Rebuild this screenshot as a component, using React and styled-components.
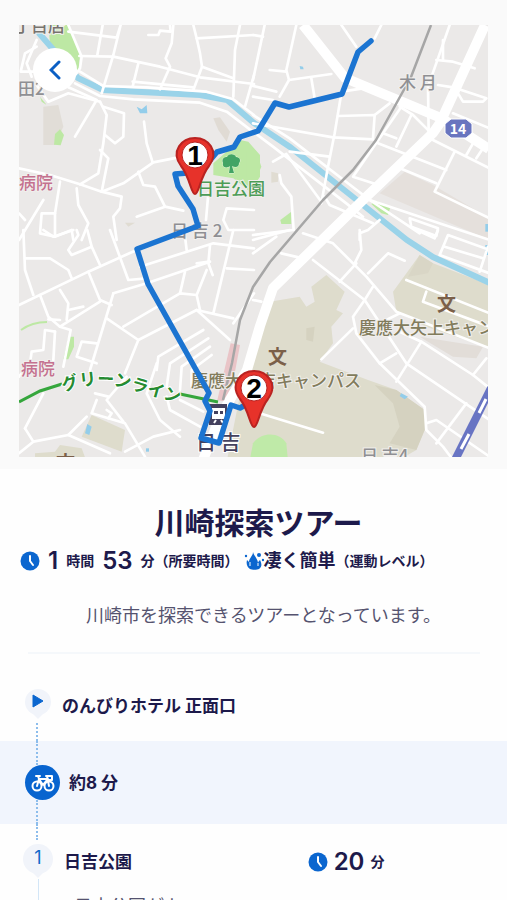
import React from 'react';
import styled, { createGlobalStyle } from 'styled-components';

const GlobalStyle = createGlobalStyle`
  * {
    box-sizing: border-box;
  }

  body {
    margin: 0;
    background-color: #fefefe;
    color: #1d1a4b;
    font-family: Inter, 'Noto Sans CJK JP', sans-serif;
  }
`;

const MapSection = styled.section`
  position: relative;
  padding: 25px 19px 12px;
  background-color: #fafafa;
`;

const MapCanvas = styled.svg`
  display: block;
  width: 100%;
  height: auto;
  font-family: 'Noto Sans CJK JP', sans-serif;
`;

const BackButton = styled.button`
  position: absolute; /* 지도 위에 표시 */
  top: 48px;
  left: 33px;
  display: flex;
  align-items: center;
  justify-content: center;
  width: 44px;
  height: 44px;
  padding: 0;
  border: none;
  border-radius: 50%;
  background-color: #fff;
  cursor: pointer;
`;

const Summary = styled.section`
  padding: 36px 0 0;
`;

const Title = styled.h1`
  margin: 0;
  padding-left: 10px;
  font-size: 30px;
  font-weight: 700;
  line-height: 36px;
  text-align: center;
`;

const StatList = styled.div`
  display: flex;
  align-items: center;
  gap: 5px;
  height: 28px;
  margin-top: 6px;
  padding-left: 20px;
  white-space: nowrap;
`;

const Stat = styled.div`
  display: flex;
  align-items: center;
  gap: ${(props) => props.$gap || 0}px;
`;

const Amount = styled.span`
  font-size: 24px;
  font-weight: 600;
  line-height: 28px;
`;

const Unit = styled.span`
  font-size: 14px;
  font-weight: 700;
  line-height: 28px;
`;

const Level = styled.span`
  font-size: 18px;
  font-weight: 700;
  line-height: 28px;
`;

const Description = styled.p`
  margin: 27px 0 0;
  padding-left: 20px;
  color: #55536f;
  font-size: 18px;
  font-weight: 400;
  line-height: 28px;
  text-align: center;
`;

const Divider = styled.hr`
  height: 2px;
  margin: 22px 27px 0 28px;
  border: none;
  background-color: #f5f8fb;
`;

const Timeline = styled.ol`
  margin: 0;
  padding: 17px 0 0;
  list-style: none;
`;

const Stop = styled.li`
  display: flex;
  min-height: ${(props) => props.$height}px;
  background-color: ${(props) => (props.$moving ? '#f1f5fd' : 'transparent')};
`;

const Rail = styled.div`
  display: flex;
  flex-direction: column;
  flex: none;
  width: ${(props) => props.$width}px;
  padding-top: ${(props) => props.$top || 0}px;
`;

const Dots = styled.span`
  flex: ${(props) => (props.$length ? 'none' : 1)};
  height: ${(props) => props.$length || 0}px;
  margin: ${(props) => props.$gap || 0}px 0 ${(props) => props.$after || 0}px 36px;
  border-left: 2px dotted #8dbdec;
`;

const Line = styled.span`
  flex: 1;
  margin-left: 38px;
  border-left: 1px solid #d3e6f7;
`;

const Pin = styled.span`
  position: relative;
  display: flex;
  align-items: center;
  justify-content: center;
  width: ${(props) => props.$size}px;
  height: ${(props) => props.$size}px;
  margin: 0 0 5px ${(props) => 38 - Math.floor(props.$size / 2)}px;
  padding-bottom: 3px;
  border-radius: 50%;
  background-color: #f1f4fa;
  color: #1069c9;
  font-size: 18px;
  line-height: 26px;

  &::after {
    content: '';
    position: absolute;
    bottom: -4px;
    left: calc(50% - 6px);
    border: 6px solid transparent;
    border-top-color: #f1f4fa;
    border-bottom: none;
  }
`;

const BikeBadge = styled.span`
  display: flex;
  align-items: center;
  justify-content: center;
  width: 35px;
  height: 35px;
  margin-left: 25px;
  border-radius: 50%;
  background-color: #0864cf;
`;

const StopBody = styled.div`
  flex: 1;
  align-self: ${(props) => (props.$top ? 'flex-start' : 'center')};
  padding-top: ${(props) => props.$top || 0}px;
`;

const StopHead = styled.div`
  display: grid;
  grid-template-columns: 55fr 45fr;
  align-items: center;
`;

const StopName = styled.h2`
  margin: 0;
  font-size: 17px;
  font-weight: 700;
  line-height: 34px;
`;

const StopText = styled.p`
  margin: 14px 0 0;
  padding: 0 20px 0 10px;
  color: #55536f;
  font-size: 18px;
  font-weight: 400;
  line-height: 28px;
`;

// 타일 하나는 3배 좌표로 되어 있음
const tiles = [
  {
    x: 0,
    y: 0,
    areas: [
      ['#bde8a4', 'M145 75H205L240 165 235 215 150 130z'],
      ['#e1ddd7', 'M130 320L175 315 190 380 165 435 130 435z'],
      ['#bde8a4', 'M165 402L180 388 192 405 182 436 162 434z'],
      ['#bde8a4', 'M120 290L140 315 125 305z'],
      ['#e0dbd4', 'M640 355L660 352 690 395 680 425 655 390z'],
      ['#bde8a4', 'M640 490L720 420 745 425 780 465 780 530 750 575 700 535 640 525z'],
      ['#93cdea', 'M410 320L425 328 440 315 442 340 420 340z'],
      ['#e0dcd2', 'M375 668L405 668 385 680z'],
    ],
    roads: [
      'M205 75L245 170 240 205 228 222', 'M57 505L150 525 240 553 305 575 370 550 460 487 535 472',
      'M205 95L350 113 362 75 340 165 305 280', 'M308 75L292 165', 'M238 168L340 170 480 200 600 232 762 252',
      'M445 105L475 105 480 92 512 95 510 75', 'M520 75L515 130 497 175 510 200 480 268',
      'M580 75L590 115 600 160 606 200 580 270', 'M590 115L762 105', 'M720 75L705 150 700 290', 'M762 225L735 320',
      'M415 190L398 260', 'M398 245L580 262', 'M606 200L700 235', 'M225 250L300 288 400 298 600 308 680 335 762 398',
      'M240 215L310 258 440 262 620 275 700 298 762 345', 'M110 140L75 160 62 215 100 215', 'M110 120L80 190 95 230',
      'M110 255L145 305 205 280 300 305', 'M205 262L290 300 225 410', 'M300 305L320 345 310 430 295 520 240 553',
      'M310 320L372 340 370 410 345 430 315 405', 'M300 450L325 475 305 575', 'M432 365L440 430 458 487',
      'M415 515L430 555 465 560 495 620 550 632', 'M410 650L495 620', 'M230 565L235 615 265 670 245 720',
      'M305 575L365 590 360 625 340 650 350 720', 'M180 545L165 640 125 640 120 700 165 710 215 690 220 720',
      'M165 640V710', 'M130 600L57 720', 'M57 640L75 660', 'M625 580L618 660', 'M762 630L680 625 670 660 685 690 762 690',
    ],
  },
  {
    x: 253,
    y: 0,
    areas: [
      ['#e5e0dc', 'M455 515L540 555 710 655V720L380 580z'],
      ['#bde8a4', 'M355 612L370 603 412 622 405 645 385 640z'],
      ['#bde8a4', 'M-20 425L10 455 25 500 10 535-20 560z'],
      ['#bde8a4', 'M82 660L115 635V672H85z'],
      ['#93cdea', 'M140 198L150 200 152 208 142 208z'],
      ['#93cdea', 'M697 672H710V695H697z'],
      ['#e0dcd2', 'M55 515L75 520V545L55 548z'],
    ],
    roads: [
      'M35 75L0 240', 'M130 75L100 210 108 240 80 290', 'M50 210L100 215', 'M108 240L235 222', 'M0 105L30 110',
      'M175 235L185 295', 'M265 75L310 140', 'M385 75L365 115', 'M0 258L70 275', 'M0 290L60 300',
      'M265 280L245 400 225 500 205 610', 'M255 348L365 345 360 415', 'M0 370L240 412 360 418', 'M365 345L410 310',
      'M265 275L330 265', 'M0 395L60 440 280 610 330 650', 'M0 345L110 415 350 600 500 700', 'M60 485L100 462 205 605',
      'M110 455L230 470', 'M440 320L480 345 530 395', 'M475 345L430 440', 'M390 400L430 415', 'M375 430L580 510',
      'M445 320L300 530 370 553', 'M525 260L527 395', 'M590 75L555 175 525 260', 'M550 180L600 185 665 205',
      'M570 120V180', 'M555 255L600 262 700 295 690 305 630 305 615 280', 'M600 340L710 385', 'M540 420L710 505',
      'M605 455L545 575 710 655', 'M430 500L550 550', 'M640 465L660 430', 'M670 475L690 445', 'M80 525L85 550 115 590 122 690',
      'M0 705L120 690', 'M215 590L230 615 360 670', 'M350 600L500 650 710 720', 'M380 660L345 690 320 700V720',
      'M470 655L555 685 550 708 475 680z',
    ],
  },
  {
    x: 0,
    y: 230,
    areas: [
      ['#e9c4c7', 'M692 340L720 345 688 517 652 510z'],
      ['#bde8a4', 'M205 320H222V350L205 388H190L200 345z'],
      ['#dedccc', 'M275 555L375 600 365 665 245 620z'],
      ['#dedccc', 'M105 670L165 665 180 645 245 655 255 682H105z'],
      ['#93cdea', 'M262 582L275 590 268 615 255 610z'],
      ['#93cdea', 'M438 655H447V665H438z'],
    ],
    roads: [
      'M57 225L265 125 410 60', 'M70 0L75 120 100 195', 'M130 0L160 20 220 0', 'M75 85L150 85 205 120 215 145',
      'M262 0L275 50 300 105', 'M275 50L215 75 205 60 235 15 230 0', 'M265 125L300 210 335 225', 'M300 215L180 290',
      'M120 195L145 260 180 290', 'M180 180L205 220 200 270', 'M205 240L250 230', 'M330 0L385 150 440 145',
      'M340 190L440 160 630 95', 'M340 190L325 240 270 420', 'M320 265L415 330 590 240 700 265', 'M415 330L375 430',
      'M370 290L540 190 590 195 600 240', 'M540 190L555 125', 'M590 195L620 120', 'M420 110L640 40 762 55',
      'M700 0L640 250', 'M762 120L680 115', 'M555 20L560 60', 'M630 45L625 100 638 135', 'M590 100L628 95',
      'M610 300L475 380 470 420', 'M625 325L510 400 500 470', 'M630 350L545 410 540 480', 'M635 375L575 420 575 470',
      'M590 240L690 330', 'M470 400L440 490 480 570 540 620', 'M500 500L510 540 600 590', 'M540 510L610 545',
      'M762 190L700 280', 'M180 290L212 300 190 410', 'M180 270L145 268', 'M165 305L135 300 130 360 95 365 90 400 57 440',
      'M165 305L160 390', 'M290 340L245 335 230 380 290 400', 'M57 670L100 635 205 615 260 560', 'M75 595L100 635',
      'M75 595L130 490', 'M290 510L275 550 375 580 435 680', 'M380 440L320 510 370 575', 'M285 490L325 500',
      'M205 615L330 670', 'M375 665L460 620 540 600', 'M320 540L335 550 325 565',
    ],
  },
  {
    x: 253,
    y: 230,
    areas: [
      ['#dedccc', 'M50 215L140 200 160 230 185 215 175 170 220 135 275 185 250 240 270 250 235 290 240 340 200 395 345 450 430 480 515 540 515 600 490 660 420 700H-80L-40 500 0 320z'],
      ['#d5d2c0', 'M160 295L185 290 180 335 160 330z'],
      ['#d5d2c0', 'M365 465L430 480 515 540 515 600 490 660 410 640 440 590 420 520z'],
      ['#dedccc', 'M500 75L540 100 710 165V355L520 290 430 245 420 185z'],
      ['#d9d6c6', 'M500 75L540 100 525 130 465 140z'],
      ['#e2ddd8', 'M500 320L690 350 670 385 600 380z'],
      ['#bfeaa8', 'M0 640C25 605 80 605 100 640L104 682H-8z'],
      ['#93cdea', 'M445 490L465 500 455 508 440 498z'],
      ['#93cdea', 'M697 45H707V75H697z'],
    ],
    roads: [
      'M150 10L240 40 340 140 430 245 710 355', 'M180 90L335 210 460 400 710 570', 'M310 100L260 155',
      'M360 170L335 210 300 260 310 310 380 400 515 530 520 600 570 650 600 690', 'M345 130L405 70 455 92',
      'M320 0L325 60 305 100', 'M300 295L205 388', 'M380 400L430 370', 'M505 335L430 455', 'M440 305L505 335 660 435 710 475',
      'M400 270L440 250', 'M660 435L700 385', 'M640 520L550 640', 'M520 580L550 570 710 680', 'M460 150L710 250',
      'M520 185L510 215 710 290', 'M710 130L560 75 585 15 710 60', 'M575 50L690 85', 'M705 50L680 125',
      'M480 -5L545 25 555 0', 'M20 550L210 608', 'M0 210L25 215', 'M85 70L150 85', 'M0 30L110 0', 'M0 70L70 20',
    ],
  },
];

const highways = [
  'M303 25L345 78 441 118 489 149',
  'M485 25L440 123 433 133 363 200 273 288 260 326 247 370 220 417 203 460',
];

const waters = ['M38 32L78 78 103 90 200 95 227 100 254 123 290 147 353 197 407 240 433 257 490 283'];

const railway = 'M431 25L411 77 376 140 353 170 323 200 270 262 253 287 240 320 232 363 223 400';

const route =
  'M371 41L358 52 342 94 289 107 275 103 258 131 240 137 234 147 217 152 200 172 175 174 178 186 193 209 198 226 137 249 148 284 209 393 205 401 210 411 201 438 219 443 231 405 240 408 254 400';

const labels = [
  { x: 14, y: 32, text: '丁目店', color: '#77736e' },
  { x: 18, y: 95, text: '田2', color: '#8f8f93' },
  { x: 19, y: 189, text: '病院', color: '#c4718f' },
  { x: 21, y: 375, text: '病院', color: '#c4718f' },
  { x: 197, y: 195, text: '日吉公園', color: '#4c9c56' },
  { x: 171, y: 237, text: '日 吉 2', color: '#8f8f93' },
  { x: 399, y: 89, text: '木 月', color: '#8f8f93' },
  { x: 191, y: 387, text: '慶應大日吉キャンパス', color: '#827c5c' },
  { x: 359, y: 334, text: '慶應大矢上キャンパス', color: '#827c5c' },
  { x: 361, y: 462, text: '日 吉4', color: '#8f8f93' },
];

const schools = [
  { x: 268, y: 364 },
  { x: 437, y: 311 },
  { x: 56, y: 470 },
];

const spots = [
  { x: 195, y: 155, number: 1 },
  { x: 254, y: 388, number: 2 },
];

const TourMap = () => (
  <MapCanvas viewBox="19 25 469 432">
    <rect x="19" y="25" width="469" height="432" fill="#ebe9e8" />
    {tiles.map((tile) => (
      <g key={`area-${tile.x}-${tile.y}`} transform={`translate(${tile.x} ${tile.y}) scale(${1 / 3})`}>
        {tile.areas.map(([color, d]) => (
          <path key={d} d={d} fill={color} />
        ))}
      </g>
    ))}
    {waters.map((d) => (
      <path key={d} d={d} fill="none" stroke="#9ad3e9" strokeWidth="6" />
    ))}
    {tiles.map((tile) => (
      <g
        key={`road-${tile.x}-${tile.y}`}
        transform={`translate(${tile.x} ${tile.y}) scale(${1 / 3})`}
        fill="none"
        stroke="#fff"
        strokeWidth="8"
        strokeLinejoin="round"
        strokeLinecap="round"
      >
        {tile.roads.map((d) => (
          <path key={d} d={d} />
        ))}
      </g>
    ))}
    {highways.map((d) => (
      <path key={d} d={d} fill="none" stroke="#fff" strokeWidth="10" strokeLinejoin="round" />
    ))}
    <path d={railway} fill="none" stroke="#a6a6a6" strokeWidth="2.5" strokeLinejoin="round" />

    {/* 고속도로 */}
    <path d="M491 388L455 460" stroke="#6874c3" strokeWidth="8" />
    <path d="M486 399L479 413M469 434L461 449" stroke="#fff" strokeWidth="3" />

    {/* 그린라인 */}
    <path d="M19 402L40 391 62 384M180 394L218 402" fill="none" stroke="#35a63c" strokeWidth="3" />
    <path d="M21 330Q32 322 47 322" fill="none" stroke="#bde8a4" strokeWidth="2" />
    <path id="greenLine" d="M64 392C87 382 112 383 137 391S167 399 195 408" fill="none" />
    <text fill="#258b31" stroke="#fff" strokeWidth="2" paintOrder="stroke" fontSize="17" fontWeight="700">
      <textPath href="#greenLine">グリーンライン</textPath>
    </text>

    {labels.map((label) => (
      <text
        key={`${label.text}${label.y}`}
        x={label.x}
        y={label.y}
        fill={label.color}
        stroke="#f1efed"
        strokeWidth="2"
        paintOrder="stroke"
        fontSize="17"
        fontWeight="500"
      >
        {label.text}
      </text>
    ))}
    {schools.map((school) => (
      <text key={school.x} x={school.x} y={school.y} fill="#7b6049" fontSize="19" fontWeight="700">
        文
      </text>
    ))}

    {/* 공원 나무 */}
    <path
      d="M229 173L230 166C226 169 222 167 223 163C221 158 225 157 227 157C229 153 235 154 236 157C240 157 241 161 239 163C239 167 236 168 232 166L234 173z"
      fill="#43a465"
      stroke="#e4f5d9"
      strokeWidth="1"
      paintOrder="stroke"
    />

    <path d="M451 119H466L472 124V133L466 138H451L445 133V124z" fill="#6975bf" stroke="#fff" strokeWidth="1" />
    <text x="458" y="134" fill="#fff" fontSize="14" fontWeight="700" textAnchor="middle">
      14
    </text>

    {/* 역 */}
    <rect x="209" y="404" width="18" height="21" fill="#44415e" />
    <path d="M213 409H224V418H213zM214 423L216 420M223 423L221 420" fill="#fff" stroke="#fff" strokeWidth="2" />
    <path d="M214 411H218V414H214zM220 411H223V414H220z" fill="#44415e" />
    <text x="196" y="450" fill="#44415e" stroke="#fff" strokeWidth="2" paintOrder="stroke" fontSize="20" fontWeight="500">
      日 吉
    </text>

    <path d={route} fill="none" stroke="#1b74d1" strokeWidth="5.5" strokeLinejoin="round" strokeLinecap="round" />

    {spots.map((spot) => (
      <g key={spot.number} transform={`translate(${spot.x} ${spot.y})`}>
        <path
          d="M0 39C-4 39-5 22-14 11C-25-4-13-17 0-17S25-4 14 11C5 22 4 39 0 39z"
          fill="#e7322a"
          stroke="#b92321"
          strokeWidth="2"
        />
        <circle r="13" fill="#fff" stroke="#b92321" strokeWidth="1" />
        <text y="10" fontFamily="'Liberation Sans', Arial, sans-serif" fontSize="28" fontWeight="700" textAnchor="middle">
          {spot.number}
        </text>
      </g>
    ))}
  </MapCanvas>
);

const ClockIcon = () => (
  <svg width="20" height="20" viewBox="-1 -1 20 20">
    <circle cx="9" cy="9" r="9.5" fill="#0b66cf" />
    <path d="M9 4V9L12 13" fill="none" stroke="#fff" strokeWidth="2" strokeLinecap="round" strokeLinejoin="round" />
  </svg>
);

const SweatIcon = () => (
  <svg width="20" height="20" viewBox="0 0 20 20" fill="#0b66cf">
    <path d="M9 1C9 5 5 7 5 11L3 9C2 13 3 16 6 18C8 19 13 19 15 18C18 16 18 13 16 9C15 10 14 11 14 12C14 8 10 5 9 1z" />
    <path d="M6 11V15M14 12V15" stroke="#fff" strokeWidth="1" />
    <circle cx="2" cy="5" r="1.2" />
    <circle cx="15" cy="4" r="2" />
    <circle cx="19" cy="9" r="1.2" />
  </svg>
);

const PlayIcon = () => (
  <svg width="12" height="14" viewBox="0 0 12 14">
    <path d="M1 1L11 7L1 13z" fill="#0b66cf" stroke="#0b66cf" strokeLinejoin="round" />
  </svg>
);

const BikeIcon = () => (
  <svg width="24" height="20" viewBox="0 0 24 20" fill="none" stroke="#fff" strokeWidth="2" strokeLinecap="round" strokeLinejoin="round">
    <circle cx="6" cy="13" r="4.5" />
    <circle cx="18" cy="13" r="4.5" />
    <path d="M5 3H9M7 3L8 6H17M8 6L6 13M8 6L12 12L17 6M15 3H21V7H18M16 3L18 13" />
  </svg>
);

const App = () => {
  return (
    <main>
      <GlobalStyle />
      <MapSection>
        <TourMap />
        <BackButton type="button" aria-label="戻る">
          <svg width="12" height="20" viewBox="0 0 12 20">
            <path d="M10 2L2 10L10 18" fill="none" stroke="#0b5fc4" strokeWidth="3" strokeLinecap="round" />
          </svg>
        </BackButton>
      </MapSection>

      <Summary>
        <Title>川崎探索ツアー</Title>
        <StatList>
          <Stat $gap={8}>
            <ClockIcon />
            <Amount>1</Amount>
            <Unit>時間</Unit>
            <Amount>53</Amount>
            <Unit>分（所要時間）</Unit>
          </Stat>
          <Stat>
            <SweatIcon />
            <Level>凄く簡単</Level>
            <Unit>（運動レベル）</Unit>
          </Stat>
        </StatList>
        <Description>川崎市を探索できるツアーとなっています。</Description>
        <Divider />
      </Summary>

      <Timeline>
        <Stop $height={70}>
          <Rail $width={62} $top={18}>
            <Pin $size={26}>
              <PlayIcon />
            </Pin>
            <Dots $gap={3} />
          </Rail>
          <StopBody>
            <StopName>のんびりホテル 正面口</StopName>
          </StopBody>
        </Stop>
        <Stop $height={83} $moving>
          <Rail $width={69}>
            <Dots />
            <BikeBadge>
              <BikeIcon />
            </BikeBadge>
            <Dots />
          </Rail>
          <StopBody>
            <StopName>約8 分</StopName>
          </StopBody>
        </Stop>
        <Stop $height={90}>
          <Rail $width={64}>
            <Dots $length={16} $after={4} />
            <Pin $size={30}>1</Pin>
            <Line />
          </Rail>
          <StopBody $top={21}>
            <StopHead>
              <StopName>日吉公園</StopName>
              <Stat $gap={6}>
                <ClockIcon />
                <Amount>20</Amount>
                <Unit>分</Unit>
              </Stat>
            </StopHead>
            <StopText>日吉公園がよ</StopText>
          </StopBody>
        </Stop>
      </Timeline>
    </main>
  );
};

export default App;
